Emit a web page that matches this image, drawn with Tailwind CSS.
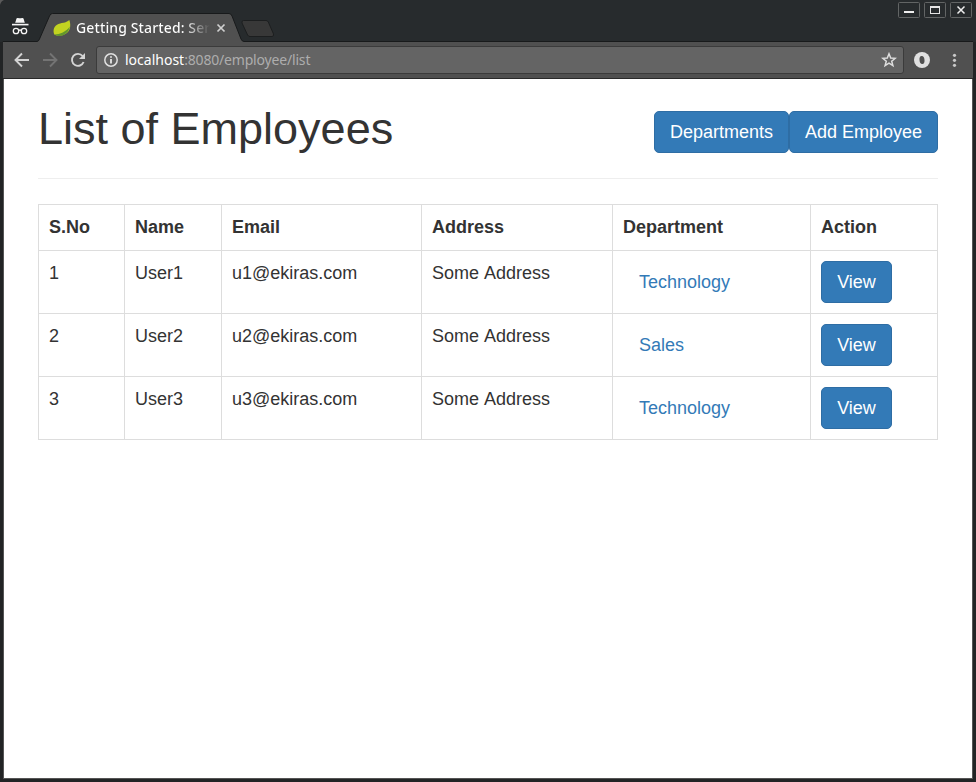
<!DOCTYPE html>
<html lang="en">
<head>
<meta charset="utf-8">
<title>List of Employees</title>
<script src="https://cdn.jsdelivr.net/npm/@tailwindcss/browser@4"></script>
</head>
<body class="w-[976px] h-[782px] overflow-hidden bg-[#272b2d] flex flex-col font-['Liberation_Sans',Arial,sans-serif]">
<header class="relative h-[42px] shrink-0">
  <svg class="absolute inset-0" width="976" height="42" viewBox="0 0 976 42" fill="none">
    <path d="M0 0H4Q1 1 0 5Z" fill="#5b5b5b"/>
    <path d="M2.500 42V41.500H37Q38.500 41.500 39.500 39L49.500 16Q50.500 13.500 52.500 13.500H229Q231 13.500 232 16L241 39Q242 41.500 244 41.500H973V42Z" fill="#505050"/>
    <path d="M2.500 41.500H37Q38.500 41.500 39.500 39L49.500 16Q50.500 13.500 52.500 13.500H229Q231 13.500 232 16L241 39Q242 41.500 244 41.500H973" stroke="#181a1b"/>
    <path d="M243.500 20.500H266Q267.500 20.500 268.300 22L273.500 34Q274 36.500 272 36.500H250Q248.500 36.500 247.600 35L242 23Q241.500 20.500 243.500 20.500Z" fill="#383838" stroke="#1c1e1f"/>
    <g fill="#f5f5f5"><path d="M16.500 18.500Q17 17.700 18 18Q20 18.700 22 18Q23 17.700 23.500 18.500L24.800 22.700H15.200Z"/><rect x="12" y="23.800" width="16.500" height="1.600"/></g>
    <g stroke="#f5f5f5" stroke-width="1.300"><circle cx="16" cy="31" r="2.700"/><circle cx="24" cy="31" r="2.700"/><path d="M18.500 30.500Q20 29.500 21.500 30.500"/></g>
    <path d="M69.300 20C66 23.500 61 22.300 57 24.700C53 27.200 53 32 54.600 34.800C60 37 68 35 70 28C70.500 25.500 70.300 22.500 69.300 20Z" fill="#c2d321"/>
    <path d="M54.500 34.600C60 34.200 66 32 69.800 26.500C69 31.500 65 36 59 35.900Q56 35.900 54.500 34.600Z" fill="#62962c"/>
    <path d="M217.500 24.500L224.500 31.500M224.500 24.500L217.500 31.500" stroke="#d0d0d0" stroke-width="1.700"/>
  </svg>
  <div class="absolute left-[76px] top-[17px] w-[134px] h-[22px] whitespace-nowrap font-['Noto_Sans',sans-serif] text-[14px] font-medium tracking-[0.12px] leading-[22px] bg-linear-to-r from-white from-80% to-transparent to-100% bg-clip-text text-transparent">Getting Started: Ser</div>
  <div class="absolute right-[4px] top-[2px] flex gap-[4px]">
    <svg width="22" height="16" viewBox="0 0 22 16" fill="none"><rect x=".5" y=".5" width="21" height="15" rx="1" stroke="#626565"/><path d="M6 10H16" stroke="#eee" stroke-width="2"/></svg>
    <svg width="22" height="16" viewBox="0 0 22 16" fill="none"><rect x=".5" y=".5" width="21" height="15" rx="1" stroke="#626565"/><rect x="6.500" y="4.500" width="9" height="7" stroke="#e4e4e4"/><path d="M6 5H16" stroke="#e4e4e4" stroke-width="2"/></svg>
    <svg width="22" height="16" viewBox="0 0 22 16" fill="none"><rect x=".5" y=".5" width="21" height="15" rx="1" stroke="#626565"/><path d="M7.500 4.500L14.500 11.500M14.500 4.500L7.500 11.500" stroke="#eee" stroke-width="1.500"/></svg>
  </div>
</header>
<div class="flex-1 min-h-0 flex flex-col border-l-[3px] border-r-[3px] border-b-[3px] border-[#222425]">
  <nav class="h-[37px] shrink-0 bg-[#505050] border-b border-[#292929] flex items-center pl-[9px]">
    <svg class="shrink-0" width="84" height="36" viewBox="12 42 84 36" fill="none" stroke-width="1.900">
      <path d="M29 60H16M22 53.500L15.500 60L22 66.500" stroke="#d4d4d4"/>
      <path d="M43 60H56M50 53.500L56.500 60L50 66.500" stroke="#747474"/>
      <path d="M82.600 56A6 6 0 1 0 83.600 62" stroke="#d4d4d4"/><path d="M85 53V59H79Z" fill="#d4d4d4"/>
    </svg>
    <div class="w-[808px] h-[28px] shrink-0 rounded-[3px] border border-[#3b3b3b] bg-[#646464] flex items-center pl-[7px] pr-[6px]">
      <svg width="14" height="14" viewBox="0 0 14 14" fill="none" stroke="#e0e0e0"><circle cx="7" cy="7" r="6.200" stroke-width="1.500"/><path d="M7 6V10.500M7 3.300V4.800" stroke-width="1.900"/></svg>
      <div class="ml-[7px] flex-1 whitespace-nowrap font-['Noto_Sans',sans-serif] text-[14px] leading-[20px] tracking-[-0.18px] text-[#adadad]"><span class="text-white tracking-[0px]">localhost</span>:8080/employee/list</div>
      <svg width="16" height="16" viewBox="0 0 16 16" fill="none" stroke="#dedede" stroke-width="1.500"><path d="M8 1.800L9.700 6L14.200 6.300L10.700 9.200L11.900 13.600L8 11.200L4.100 13.600L5.300 9.200L1.800 6.300L6.300 6Z"/></svg>
    </div>
    <svg class="shrink-0" width="68" height="36" viewBox="904 42 68 36"><circle cx="922" cy="60" r="8" fill="#e0e0e0"/><ellipse cx="922" cy="60" rx="2.500" ry="4" fill="#505050" transform="rotate(-6 922 60)"/><g fill="#c8c8c8"><circle cx="954.500" cy="55.300" r="1.600"/><circle cx="954.500" cy="60.300" r="1.600"/><circle cx="954.500" cy="65.300" r="1.600"/></g></svg>
  </nav>
  <main class="flex-1 bg-white border-x border-b border-[#555] pl-[34px] text-[#333] text-[18px] leading-[25px]">
    <div class="w-[900px] h-[100px] border-b border-[#eee] flex justify-between">
      <h1 class="mt-[25px] text-[45px] leading-[50px] font-medium">List of Employees</h1>
      <div class="mt-[32px] flex text-white">
        <a class="w-[135px] h-[42px] rounded-[5px] border border-[#2e6da4] bg-[#337ab7] text-center leading-[40px]">Departments</a>
        <a class="w-[149px] h-[42px] rounded-[5px] border border-[#2e6da4] bg-[#337ab7] text-center leading-[40px]">Add Employee</a>
      </div>
    </div>
    <table class="mt-[25px] w-[900px] table-fixed border-separate border-spacing-0 border-l border-t border-[#ddd] text-left [&_td]:border-r [&_td]:border-b [&_td]:border-[#ddd] [&_td]:p-[10px] [&_td]:align-top [&_th]:border-r [&_th]:border-b [&_th]:border-[#ddd] [&_th]:px-[10px] [&_th]:py-0">
      <colgroup><col class="w-[86px]"><col class="w-[97px]"><col class="w-[200px]"><col class="w-[191px]"><col class="w-[198px]"><col class="w-[127px]"></colgroup>
      <thead><tr class="h-[46px]"><th>S.No</th><th>Name</th><th>Email</th><th>Address</th><th>Department</th><th>Action</th></tr></thead>
      <tbody>
        <tr class="h-[63px]"><td>1</td><td>User1</td><td>u1@ekiras.com</td><td class="[word-spacing:1px]">Some Address</td><td><a class="block pl-[16px] leading-[42px] text-[#337ab7]">Technology</a></td><td><a class="block w-[71px] h-[42px] rounded-[5px] border border-[#2e6da4] bg-[#337ab7] text-white text-center leading-[40px]">View</a></td></tr>
        <tr class="h-[63px]"><td>2</td><td>User2</td><td>u2@ekiras.com</td><td class="[word-spacing:1px]">Some Address</td><td><a class="block pl-[16px] leading-[42px] text-[#337ab7]">Sales</a></td><td><a class="block w-[71px] h-[42px] rounded-[5px] border border-[#2e6da4] bg-[#337ab7] text-white text-center leading-[40px]">View</a></td></tr>
        <tr class="h-[63px]"><td>3</td><td>User3</td><td>u3@ekiras.com</td><td class="[word-spacing:1px]">Some Address</td><td><a class="block pl-[16px] leading-[42px] text-[#337ab7]">Technology</a></td><td><a class="block w-[71px] h-[42px] rounded-[5px] border border-[#2e6da4] bg-[#337ab7] text-white text-center leading-[40px]">View</a></td></tr>
      </tbody>
    </table>
  </main>
</div>
</body>
</html>
